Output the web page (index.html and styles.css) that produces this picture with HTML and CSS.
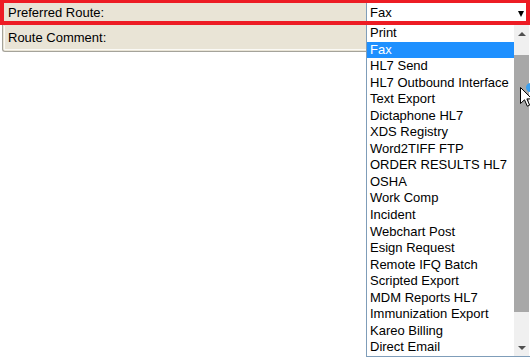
FILE: index.html
```html
<!DOCTYPE html>
<html lang="en">
<head>
    <meta charset="UTF-8" />
    <title>Route</title>
    <link rel="stylesheet" href="styles.css">
</head>
<body>
<div class="panel">
    <div class="row">
        <div class="label">Preferred Route:</div>
        <div class="field">
            <div class="select">Fax<span class="arrow"></span></div>
        </div>
    </div>
    <div class="row row-comment">
        <div class="label">Route Comment:</div>
        <div class="field"></div>
    </div>
</div>

<!-- open dropdown of the select -->
<div class="dropdown">
    <ul class="options">
        <li>Print</li>
        <li class="current">Fax</li>
        <li>HL7 Send</li>
        <li>HL7 Outbound Interface</li>
        <li>Text Export</li>
        <li>Dictaphone HL7</li>
        <li>XDS Registry</li>
        <li>Word2TIFF FTP</li>
        <li>ORDER RESULTS HL7</li>
        <li>OSHA</li>
        <li>Work Comp</li>
        <li>Incident</li>
        <li>Webchart Post</li>
        <li>Esign Request</li>
        <li>Remote IFQ Batch</li>
        <li>Scripted Export</li>
        <li>MDM Reports HL7</li>
        <li>Immunization Export</li>
        <li>Kareo Billing</li>
        <li>Direct Email</li>
    </ul>
    <div class="scrollbar">
        <span class="btn up"></span>
        <div class="track"><div class="thumb"></div></div>
        <span class="btn down"></span>
    </div>
</div>

<div class="highlight"></div>

<svg class="cursor" width="14" height="22" viewBox="0 0 14 22">
    <path d="M0.5 0.5 L0.5 16.5 L4.5 12.8 L7.3 19.2 L9.6 18.2 L6.9 11.9 L12 11.9 Z" fill="#fff" stroke="#000" stroke-width="1"/>
</svg>
<span class="busy"></span>
</body>
</html>
```

FILE: styles.css
```css
* {margin:0; padding:0; box-sizing: border-box;}
ul {list-style: none;}
body {
    font-family: "Liberation Sans", Arial, sans-serif;
    font-size: 13px;
    color: #000;
    background: #fff;
    width: 530px;
    height: 358px;
    overflow: hidden;
    position: relative;
}
.panel {
    width: 528px;
    margin-left: 2px;
    border-left: 1px solid #a5a39a;
    border-bottom: 1px solid #a5a39a;
    border-bottom-left-radius: 3px;
    padding: 0 0 1px 1px;
    background: #e9e4d6;
}
.row {
    display: flex;
    height: 25px;
}
.row-comment {
    height: 24px;
    margin-top: 1px;
    border-left: 1px solid #fbfaf6;
    border-bottom: 1px solid #fbfaf6;
}
.label {
    width: 362px;
    padding-left: 4px;
    display: flex;
    align-items: center;
    background: #e9e4d6;
}
.row-comment .label {
    width: 361px;
    padding-left: 3px;
}
.field {
    flex: 1;
}
.select {
    position: relative;
    height: 19px;
    margin-top: 3px;
    background: #fff;
    border-left: 1px solid #7f9db9;
    padding-left: 3px;
    line-height: 19px;
    font-size: 13px;
}
.arrow {
    position: absolute;
    left: 151px;
    top: 8px;
    border-top: 6px solid #000;
    border-left: 3.5px solid transparent;
    border-right: 3.5px solid transparent;
}

/* popup list */
.dropdown {
    position: absolute;
    left: 366px;
    top: 25px;
    width: 165px;
    height: 332px;
    display: flex;
    background: #fff;
    border: 1px solid #7f9db9;
    border-top: none;
}
.options {
    flex: 1;
}
.options li {
    height: 16.55px;
    line-height: 16.55px;
    padding-left: 3px;
    white-space: nowrap;
}
.options li.current {
    background-color: #1e90ff;
    color: #fff;
}
.scrollbar {
    width: 15px;
    margin-right: 1px;
    background: #f0f0f0;
    display: flex;
    flex-direction: column;
}
.scrollbar .btn {
    height: 17px;
    display: flex;
    align-items: center;
    justify-content: center;
}
.scrollbar .btn::before {
    content: "";
    border-left: 4px solid transparent;
    border-right: 4px solid transparent;
}
.scrollbar .up::before {
    border-bottom: 4px solid #505050;
}
.scrollbar .down::before {
    border-top: 4px solid #505050;
}
.track {
    flex: 1;
    padding: 13px 0 27px;
}
.thumb {
    height: 100%;
    background: #a8a8a8;
}

/* red annotation box */
.highlight {
    position: absolute;
    left: 0;
    top: -1px;
    width: 530px;
    height: 26px;
    border: 4px solid #ed1c24;
}
.cursor {
    position: absolute;
    left: 520px;
    top: 87px;
}
.busy {
    position: absolute;
    left: 526px;
    top: 83px;
    width: 9px;
    height: 9px;
    border-radius: 50%;
    background: #3aa0f0;
}
```
